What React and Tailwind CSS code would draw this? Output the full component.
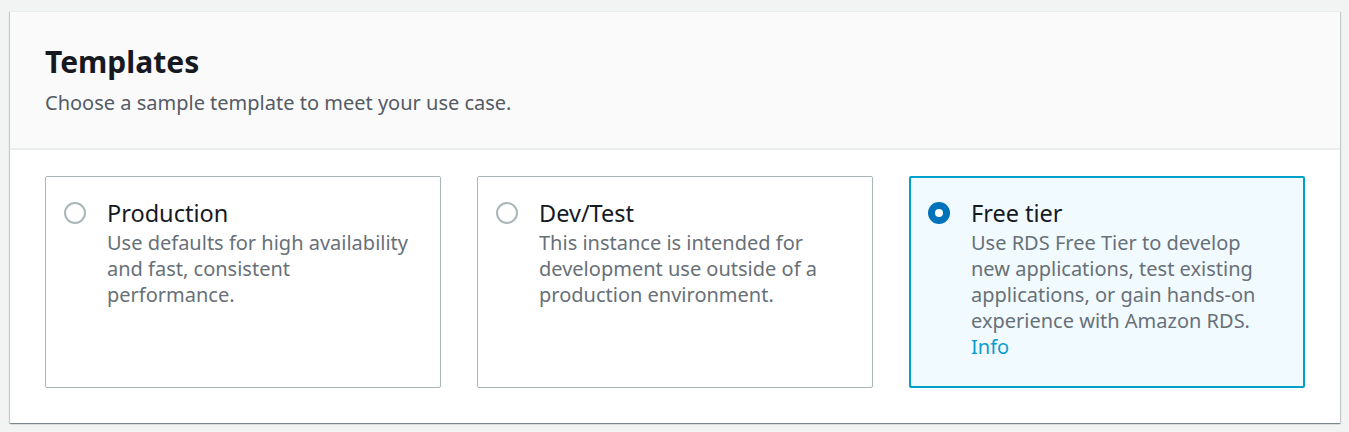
import React from "react";

const cards = [
  {
    title: "Production",
    lines: "Use defaults for high availability and fast, consistent performance.",
    selected: false,
  },
  {
    title: "Dev/Test",
    lines: "This instance is intended for development use outside of a production environment.",
    selected: false,
  },
  {
    title: "Free tier",
    lines: "Use RDS Free Tier to develop new applications, test existing applications, or gain hands-on experience with Amazon RDS.",
    selected: true,
  },
];

function Radio({ selected }) {
  if (selected) {
    return (
      <span className="mt-[6px] flex h-[22px] w-[22px] shrink-0 items-center justify-center rounded-full bg-[#0073bb]">
        <span className="h-[8px] w-[8px] rounded-full bg-white" />
      </span>
    );
  }
  return (
    <span className="mt-[6px] h-[22px] w-[22px] shrink-0 rounded-full border-2 border-[#aab7b8] bg-white" />
  );
}

export default function App() {
  return (
    <div
      className="min-h-[432px] w-full bg-[#f2f3f3] pl-[10px] pr-[9px] pt-[11px]"
      style={{ fontFamily: '"Noto Sans", "Open Sans", sans-serif' }}
    >
      <div className="w-[1330px] border-t border-[#eaeded] bg-white shadow-[0_1px_1px_0_rgba(0,28,36,0.3),1px_1px_1px_0_rgba(0,28,36,0.15),-1px_1px_1px_0_rgba(0,28,36,0.15)]">
        <div className="border-b-2 border-[#eaeded] bg-[#fafafa] px-[35px] pb-[32px] pt-[32px]">
          <h2 className="text-[30px] font-bold leading-[36px] text-[#16191f]">Templates</h2>
          <p className="mt-[10px] text-[20px] leading-[26px] text-[#545b64]">
            Choose a sample template to meet your use case.
          </p>
        </div>
        <div className="grid grid-cols-3 gap-[36px] px-[35px] pb-[35px] pt-[26px]">
          {cards.map((c) => (
            <div
              key={c.title}
              className={
                c.selected
                  ? "flex gap-[21px] rounded-[2px] border-2 border-[#00a1c9] bg-[#f1faff] pb-[26px] pl-[17px] pr-[20px] pt-[18px]"
                  : "flex gap-[21px] rounded-[2px] border border-[#aab7b8] bg-white pb-[27px] pl-[18px] pr-[21px] pt-[19px]"
              }
            >
              <Radio selected={c.selected} />
              <div className="min-w-0">
                <div className="text-[23.5px] leading-[34px] text-[#16191f]">{c.title}</div>
                <div className="text-[20px] leading-[26px] text-[#687078]">
                  {c.lines}
                  {c.selected && (
                    <>
                      <br />
                      <span className="text-[#0a9dcf]">Info</span>
                    </>
                  )}
                </div>
              </div>
            </div>
          ))}
        </div>
      </div>
    </div>
  );
}
